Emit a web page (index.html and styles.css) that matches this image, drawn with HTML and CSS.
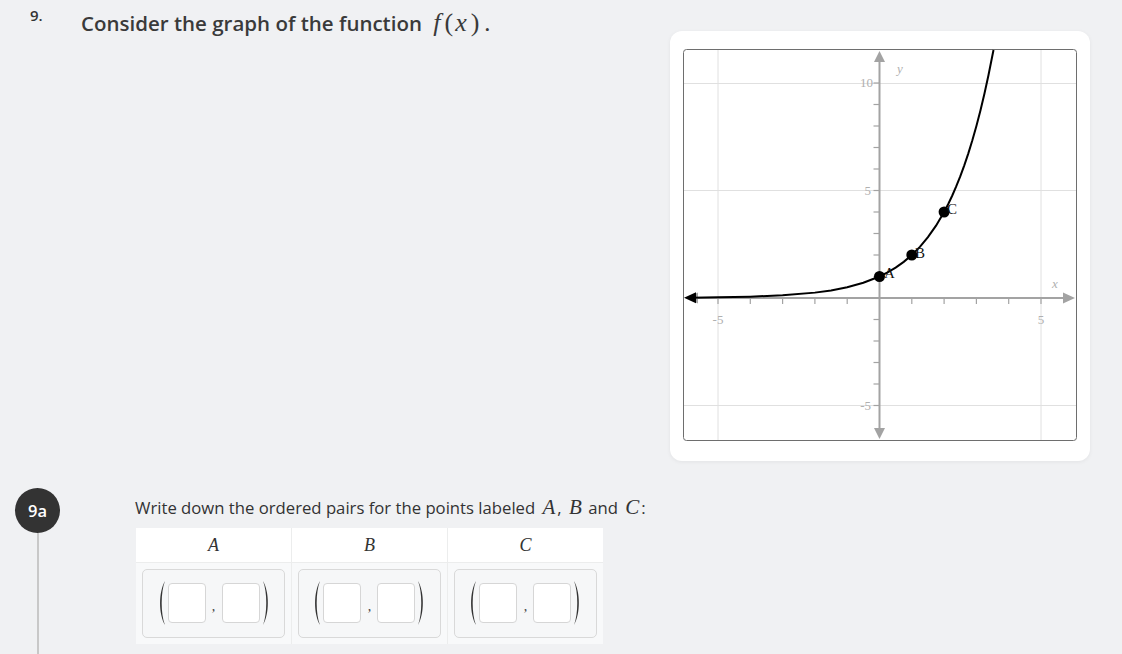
FILE: index.html
```html
<!DOCTYPE html>
<html>
<head>
<meta charset="utf-8">
<link rel="stylesheet" href="styles.css">
</head>
<body>
<div class="page">
  <section class="question">
    <div class="qnum">9.</div>
    <h1 class="qtitle">Consider the graph of the function <span class="math"><i>f</i><span class="p">(</span><i>x</i><span class="p">)</span></span>.</h1>
    <div class="card">
      <svg class="graph" width="394" height="392" viewBox="0 0 394 392">
        <rect x="0.5" y="0.5" width="393" height="391" rx="3" fill="#fff" stroke="#6e6e6e"/>
        <g stroke="#e0e0e0" stroke-width="1">
          <line x1="35" y1="1" x2="35" y2="391"/>
          <line x1="358" y1="1" x2="358" y2="391"/>
          <line x1="1" y1="34.5" x2="393" y2="34.5"/>
          <line x1="1" y1="141.5" x2="393" y2="141.5"/>
          <line x1="1" y1="356.5" x2="393" y2="356.5"/>
        </g>
        <g stroke="#a3a3a3" stroke-width="2">
          <line x1="8" y1="249" x2="384" y2="249"/>
          <line x1="196.5" y1="10" x2="196.5" y2="382"/>
        </g>
        <g stroke="#a3a3a3" stroke-width="1.2">
          <line x1="67.3" y1="249" x2="67.3" y2="255"/>
          <line x1="99.6" y1="249" x2="99.6" y2="255"/>
          <line x1="131.9" y1="249" x2="131.9" y2="255"/>
          <line x1="164.2" y1="249" x2="164.2" y2="255"/>
          <line x1="228.8" y1="249" x2="228.8" y2="255"/>
          <line x1="261.1" y1="249" x2="261.1" y2="255"/>
          <line x1="293.4" y1="249" x2="293.4" y2="255"/>
          <line x1="325.7" y1="249" x2="325.7" y2="255"/>
          <line x1="35" y1="249" x2="35" y2="255"/>
          <line x1="358" y1="249" x2="358" y2="255"/>
          <line x1="190.5" y1="34" x2="196.5" y2="34"/>
          <line x1="190.5" y1="55.5" x2="196.5" y2="55.5"/>
          <line x1="190.5" y1="77" x2="196.5" y2="77"/>
          <line x1="190.5" y1="98.5" x2="196.5" y2="98.5"/>
          <line x1="190.5" y1="120" x2="196.5" y2="120"/>
          <line x1="190.5" y1="141.5" x2="196.5" y2="141.5"/>
          <line x1="190.5" y1="163" x2="196.5" y2="163"/>
          <line x1="190.5" y1="184.5" x2="196.5" y2="184.5"/>
          <line x1="190.5" y1="206" x2="196.5" y2="206"/>
          <line x1="190.5" y1="227.5" x2="196.5" y2="227.5"/>
          <line x1="190.5" y1="270.5" x2="196.5" y2="270.5"/>
          <line x1="190.5" y1="292" x2="196.5" y2="292"/>
          <line x1="190.5" y1="313.5" x2="196.5" y2="313.5"/>
          <line x1="190.5" y1="335" x2="196.5" y2="335"/>
          <line x1="190.5" y1="356.5" x2="196.5" y2="356.5"/>
        </g>
        <g fill="#a3a3a3">
          <polygon points="392,249 380,243.5 380,254.5"/>
          <polygon points="3,249 15,243.5 15,254.5"/>
          <polygon points="196.5,2 191,13 202,13"/>
          <polygon points="196.5,390 191,379 202,379"/>
        </g>
        <g class="ticklabel" fill="#b0b0b0" font-size="13">
          <text x="190" y="38" text-anchor="end">10</text>
          <text x="188" y="146" text-anchor="end">5</text>
          <text x="188" y="361" text-anchor="end">-5</text>
          <text x="35" y="275" text-anchor="middle">-5</text>
          <text x="358" y="275" text-anchor="middle">5</text>
          <text x="214" y="24" font-style="italic">y</text>
          <text x="369" y="239" font-style="italic">x</text>
        </g>
        <polyline fill="none" stroke="#000" stroke-width="2" points="8,248.7 35,248.33 67.3,247.66 99.6,246.31 131.9,243.63 148.05,241.4 164.2,238.25 180.35,233.8 196.5,227.5 204.58,223.43 212.65,218.59 220.73,212.84 228.8,206 236.88,197.86 244.95,188.19 253.03,176.68 261.1,163 265.14,155.22 269.18,146.73 273.21,137.48 277.25,127.38 281.29,116.37 285.33,104.37 289.36,91.27 293.4,77 297.44,61.43 301.48,44.46 305.51,25.94 309.55,5.76 310.52,1"/>
        <polygon fill="#000" points="1,248.8 13,243.3 13,254.3"/>
        <g fill="#000">
          <circle cx="196.5" cy="227.5" r="5.5"/>
          <circle cx="228.8" cy="206" r="5.5"/>
          <circle cx="261.1" cy="163" r="5.5"/>
        </g>
        <g class="ptlabel" fill="#111" font-size="15">
          <text x="201" y="229">A</text>
          <text x="232" y="209">B</text>
          <text x="264" y="165">C</text>
        </g>
      </svg>
    </div>
  </section>
  <section class="part">
    <div class="rail">
      <div class="badge">9a</div>
      <div class="rail-line"></div>
    </div>
    <div class="part-body">
      <p class="prompt">Write down the ordered pairs for the points labeled <span class="mvar">A</span>, <span class="mvar">B</span> and <span class="mvar">C</span>:</p>
      <table class="pairs">
        <thead>
          <tr><th><span class="mvar">A</span></th><th><span class="mvar">B</span></th><th><span class="mvar">C</span></th></tr>
        </thead>
        <tbody>
          <tr>
            <td><div class="pair">
              <svg class="paren" width="8" height="46" viewBox="0 0 8 46"><path d="M7,1 C0.5,12 0.5,34 7,45 C2.6,34 2.6,12 7,1Z"/></svg>
              <span class="field"></span><span class="comma">,</span><span class="field"></span>
              <svg class="paren" width="8" height="46" viewBox="0 0 8 46"><path d="M1,1 C7.5,12 7.5,34 1,45 C5.4,34 5.4,12 1,1Z"/></svg>
            </div></td>
            <td><div class="pair">
              <svg class="paren" width="8" height="46" viewBox="0 0 8 46"><path d="M7,1 C0.5,12 0.5,34 7,45 C2.6,34 2.6,12 7,1Z"/></svg>
              <span class="field"></span><span class="comma">,</span><span class="field"></span>
              <svg class="paren" width="8" height="46" viewBox="0 0 8 46"><path d="M1,1 C7.5,12 7.5,34 1,45 C5.4,34 5.4,12 1,1Z"/></svg>
            </div></td>
            <td><div class="pair">
              <svg class="paren" width="8" height="46" viewBox="0 0 8 46"><path d="M7,1 C0.5,12 0.5,34 7,45 C2.6,34 2.6,12 7,1Z"/></svg>
              <span class="field"></span><span class="comma">,</span><span class="field"></span>
              <svg class="paren" width="8" height="46" viewBox="0 0 8 46"><path d="M1,1 C7.5,12 7.5,34 1,45 C5.4,34 5.4,12 1,1Z"/></svg>
            </div></td>
          </tr>
        </tbody>
      </table>
    </div>
  </section>
</div>
</body>
</html>
```
FILE: styles.css
```css
* { box-sizing: border-box; }
html, body { margin: 0; padding: 0; }
body {
  background: #f0f1f3;
  font-family: "Open Sans", Lato, sans-serif;
  color: #333;
  width: 1122px;
  height: 654px;
  overflow: hidden;
}
.page { display: flex; flex-direction: column; height: 654px; }

.question {
  display: flex;
  align-items: flex-start;
  padding: 0 32px 0 30px;
}
.qnum {
  width: 51px;
  font-size: 15px;
  font-weight: 600;
  color: #333;
  padding-top: 5px;
  line-height: 20px;
}
.qtitle {
  flex: 1;
  margin: 0;
  padding-top: 9px;
  font-size: 20.5px;
  line-height: 28px;
  font-weight: 600;
  color: #3a3a3a;
}
.math {
  font-family: "Liberation Serif", "DejaVu Serif", serif;
  font-weight: 400;
  font-size: 26px;
  margin-left: 6px;
  margin-right: 3px;
}
.math i { font-style: italic; }
.math .p { margin: 0 2px 0 4px; }

.card {
  margin-top: 31px;
  width: 420px;
  height: 430px;
  padding: 18px 13px 20px 13px;
  background: #fff;
  border-radius: 12px;
  box-shadow: 0 1px 4px rgba(0,0,0,0.06);
}
.graph { display: block; }
.graph text { font-family: "Liberation Serif", "DejaVu Serif", serif; }

.part {
  display: flex;
  flex: 1;
  margin-top: 27px;
}
.rail {
  width: 135px;
  display: flex;
  flex-direction: column;
  padding-left: 15px;
}
.badge {
  width: 45px;
  height: 45px;
  border-radius: 50%;
  background: #333;
  color: #fff;
  font-weight: 600;
  font-size: 16.5px;
  display: flex;
  align-items: center;
  justify-content: center;
}
.rail-line {
  flex: 1;
  width: 2px;
  margin-left: 21.5px;
  background: #c8c8c8;
}
.part-body { padding-top: 7px; }
.prompt {
  margin: 0;
  font-size: 16.7px;
  line-height: 24px;
  color: #333;
}
.mvar {
  font-family: "Liberation Serif", "DejaVu Serif", serif;
  font-style: italic;
  font-size: 21px;
  margin: 0 2px 0 3px;
}
.pairs {
  margin-top: 8px;
  margin-left: 1px;
  border-collapse: collapse;
  width: 467px;
  table-layout: fixed;
}
.pairs th {
  background: #fff;
  height: 34px;
  font-weight: 400;
  border-right: 1px solid #eceded;
  border-bottom: 1px solid #eceded;
  color: #333;
}
.pairs th .mvar { font-size: 18px; margin: 0; }
.pairs th:last-child, .pairs td:last-child { border-right: none; }
.pairs td {
  background: #f8f9fa;
  padding: 6px;
  border-right: 1px solid #eceded;
}
.pair {
  height: 69px;
  border: 1px solid #d9d9d9;
  border-radius: 5px;
  background: #f6f7f8;
  display: flex;
  align-items: center;
  justify-content: center;
}
.paren { display: block; fill: #333; margin: 0 2px; }
.field {
  width: 38px;
  height: 40px;
  background: #fff;
  border: 1px solid #d6d6d6;
  border-radius: 4px;
}
.comma {
  font-family: "Liberation Serif", serif;
  font-size: 14px;
  color: #444;
  width: 16px;
  text-align: center;
  padding-top: 8px;
}
```
